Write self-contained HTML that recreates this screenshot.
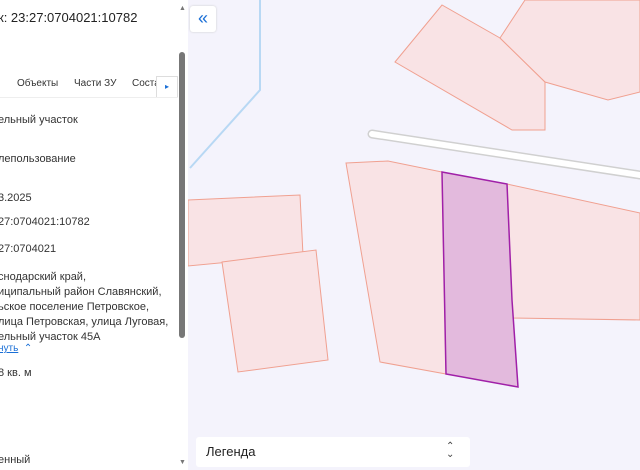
<!DOCTYPE html>
<html><head><meta charset="utf-8"><style>
body{margin:0;width:640px;height:470px;overflow:hidden;position:relative;font-family:"Liberation Sans","Noto Sans CJK SC",sans-serif;background:#f4f3fc;color:#222}
#panel{position:absolute;left:0;top:0;width:188px;height:470px;background:#fff;overflow:hidden}
.t{position:absolute;white-space:nowrap;font-size:11px;color:#333}
</style></head><body>
<svg width="640" height="470" style="position:absolute;left:0;top:0">
<polyline points="260,0 260,90 190,168" fill="none" stroke="#b8d8f4" stroke-width="2"/>
<g fill="#f9e3e5" stroke="#f0a090" stroke-width="1">
<polygon points="395,62 442,5 500,38 545,82 545,130 512,130"/>
<polygon points="500,38 525,0 640,0 640,92 608,100 545,82"/>
<polygon points="346,163 388,161 442,172 446,374 380,362"/>
<polygon points="507,184 640,213 640,320 512,318"/>
<polygon points="188,200 300,195 303,255 188,266"/>
<polygon points="222,262 316,250 328,360 238,372"/>
</g>
<line x1="372" y1="134" x2="640" y2="175" stroke="#d0d0d0" stroke-width="9" stroke-linecap="round"/>
<line x1="372" y1="134" x2="640" y2="175" stroke="#fff" stroke-width="6" stroke-linecap="round"/>
<polygon points="442,172 507,184 512,300 518,387 446,374" fill="#e3badd" stroke="#a020a8" stroke-width="1.5"/>
</svg>
<div style="position:absolute;left:190px;top:6px;width:26px;height:26px;background:#fff;border-radius:3px;box-shadow:0 0 2px #ccc;color:#1a6fd6;font-size:18px;text-align:center;line-height:24px">«</div>
<div style="position:absolute;left:196px;top:437px;width:274px;height:30px;background:#fff;border-radius:3px"><span style="position:absolute;left:10px;top:7px;font-size:13px;color:#222">Легенда</span><span style="position:absolute;left:250px;top:6px;font-size:10px;line-height:8px;color:#444">⌃<br>⌄</span></div>
<div id="panel">
<div class="t" style="left:-2px;top:10px;font-size:13px;color:#222">к: 23:27:0704021:10782</div>
<div class="t" style="left:17px;top:78px;font-size:10px">Объекты</div>
<div class="t" style="left:74px;top:78px;font-size:10px">Части ЗУ</div>
<div class="t" style="left:132px;top:78px;font-size:10px">Соста</div>
<div style="position:absolute;left:156px;top:76px;width:20px;height:20px;background:#fff;border:1px solid #ddd;color:#1a6fd6;font-size:8px;text-align:center;line-height:20px">▸</div>
<div style="position:absolute;left:0;top:97px;width:178px;height:1px;background:#eee"></div>
<div class="t" style="left:-2px;top:114px">ельный участок</div>
<div class="t" style="left:-2px;top:153px">лепользование</div>
<div class="t" style="left:-2px;top:192px">3.2025</div>
<div class="t" style="left:-2px;top:216px">27:0704021:10782</div>
<div class="t" style="left:-2px;top:243px">27:0704021</div>
<div class="t" style="left:-2px;top:270px;line-height:15px">снодарский край,<br>иципальный район Славянский,<br>ьское поселение Петровское,<br>лица Петровская, улица Луговая,<br>ельный участок 45А</div>
<div class="t" style="left:-2px;top:343px;color:#1a6fd6;font-size:10px"><u>нуть</u> &nbsp;⌃</div>
<div class="t" style="left:-2px;top:367px">8 кв. м</div>
<div class="t" style="left:-2px;top:454px">енный</div>
<div style="position:absolute;left:179px;top:52px;width:6px;height:286px;background:#777;border-radius:3px"></div>
<div style="position:absolute;left:179px;top:5px;font-size:7px;color:#777">▲</div>
<div style="position:absolute;left:179px;top:459px;font-size:7px;color:#777">▼</div>
</div>
</body></html>
